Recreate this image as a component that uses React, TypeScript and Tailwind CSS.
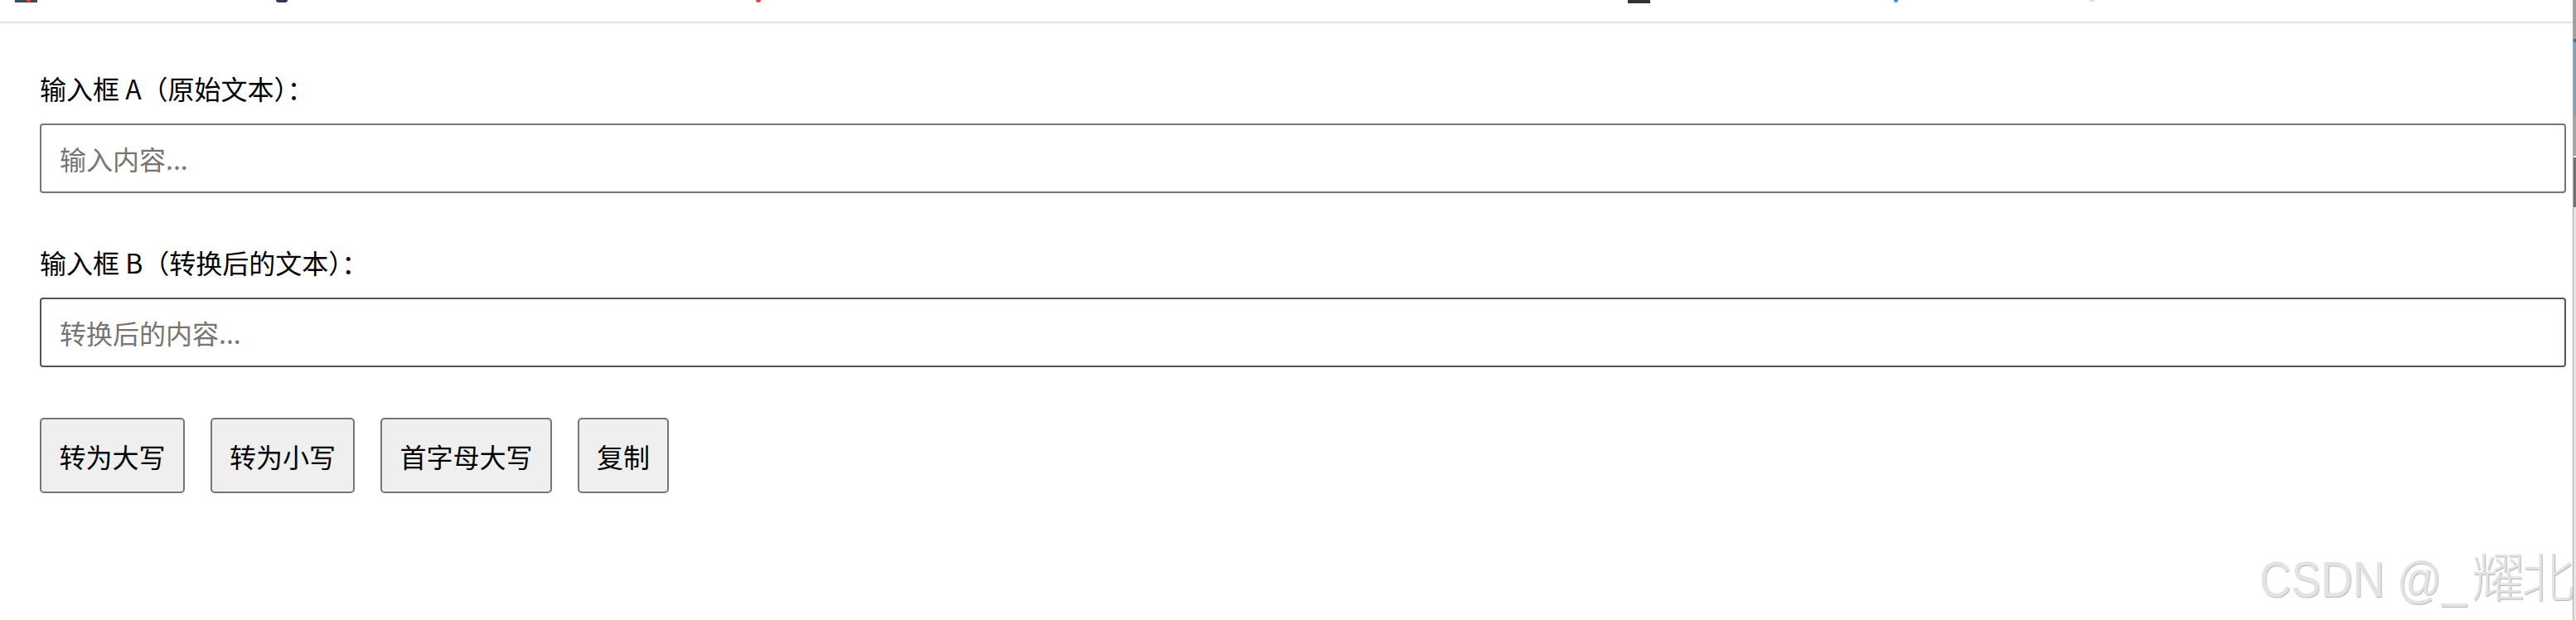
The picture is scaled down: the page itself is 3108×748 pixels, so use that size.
import { useState } from 'react'

const BUTTONS = [
  { key: 'upper', label: '转为大写', w: 'w-[175px]' },
  { key: 'lower', label: '转为小写', w: 'w-[174px]' },
  { key: 'title', label: '首字母大写', w: 'w-[207px]' },
  { key: 'copy', label: '复制', w: 'w-[110px]' },
]

export default function App() {
  const [textA, setTextA] = useState('')
  const [textB, setTextB] = useState('')

  function handle(key: string) {
    if (key === 'upper') setTextB(textA.toUpperCase())
    else if (key === 'lower') setTextB(textA.toLowerCase())
    else if (key === 'title') setTextB(textA.replace(/\b\w/g, (c) => c.toUpperCase()))
    else if (key === 'copy') navigator.clipboard?.writeText(textB)
  }

  return (
    <div className="flex h-[748px] w-[3108px] overflow-hidden bg-white font-['Noto_Sans_CJK_SC',sans-serif] text-black">
      <div className="relative flex w-[3104px] flex-col">
        {/* cut-off toolbar above the page */}
        <div className="flex h-[26px] shrink-0 items-start border-b-2 border-[#e2e2e2] box-content">
          <div className="ml-[18px] flex h-[3px] w-[27px] bg-[#3d4b5c]">
            <div className="ml-[14px] h-[2px] w-[5px] bg-[#d64545]" />
          </div>
          <div className="ml-[288px] h-[3px] w-[14px] rounded-b-full bg-[#2f3a5a]" />
          <div className="ml-[565px] h-[3px] w-[6px] rounded-b-full bg-[#e04848]" />
          <div className="ml-[1046px] h-[4px] w-[27px] bg-[#333]" />
          <div className="ml-[294px] h-[3px] w-[5px] rounded-b-full bg-[#3b8eea]" />
          <div className="ml-[231px] h-[2px] w-[6px] bg-[#dedede]" />
        </div>

        {/* form */}
        <div className="flex flex-col pl-[48px] pr-[8px] pt-[55px]">
          <label className="mb-[20px] text-[32px] leading-[46px]">输入框 A（原始文本）：</label>
          <input
            value={textA}
            onChange={(e) => setTextA(e.target.value)}
            placeholder="输入内容..."
            className="mb-[60px] h-[84px] w-full rounded-[4px] border-2 border-[#767676] px-[22px] text-[32px] outline-none placeholder:text-[#757575]"
          />

          <label className="mb-[20px] text-[32px] leading-[46px]">输入框 B（转换后的文本）：</label>
          <input
            value={textB}
            onChange={(e) => setTextB(e.target.value)}
            placeholder="转换后的内容..."
            className="mb-[61px] h-[84px] w-full rounded-[4px] border-2 border-[#555] px-[22px] text-[32px] outline-none placeholder:text-[#757575]"
          />

          <div className="flex gap-[31px]">
            {BUTTONS.map((b) => (
              <button
                key={b.key}
                onClick={() => handle(b.key)}
                className={`${b.w} h-[91px] rounded-[5px] border-2 border-[#767676] bg-[#efefef] text-center text-[32px] text-black`}
              >
                {b.label}
              </button>
            ))}
          </div>
        </div>

        {/* watermark */}
        <div className="pointer-events-none absolute left-[2726px] top-[660px] flex items-baseline whitespace-nowrap leading-none text-[#e3e3e3] [text-shadow:1px_1px_1px_#b5b5b5]">
          <span className="inline-block w-[256px]">
            <span className="inline-block origin-left scale-x-[0.86] font-['Liberation_Sans',sans-serif] text-[62px]">CSDN @_</span>
          </span>
          <span className="text-[64px] font-light tracking-[-4px]">耀北</span>
        </div>
      </div>

      {/* edge of the neighbouring window */}
      <div className="flex w-[4px] flex-col border-l border-[#a8a8a8]">
        <div className="h-[47px] bg-[#a59f94]" />
        <div className="h-[4px] bg-[#2b6fb0]" />
        <div className="h-[89px] bg-[#6aaad6]" />
        <div className="h-[48px] bg-[#b0a590]" />
        <div className="h-[2px] bg-white" />
        <div className="h-[60px] bg-[#7d705c]" />
        <div className="flex-1 bg-[#e6e6e6]" />
      </div>
    </div>
  )
}
